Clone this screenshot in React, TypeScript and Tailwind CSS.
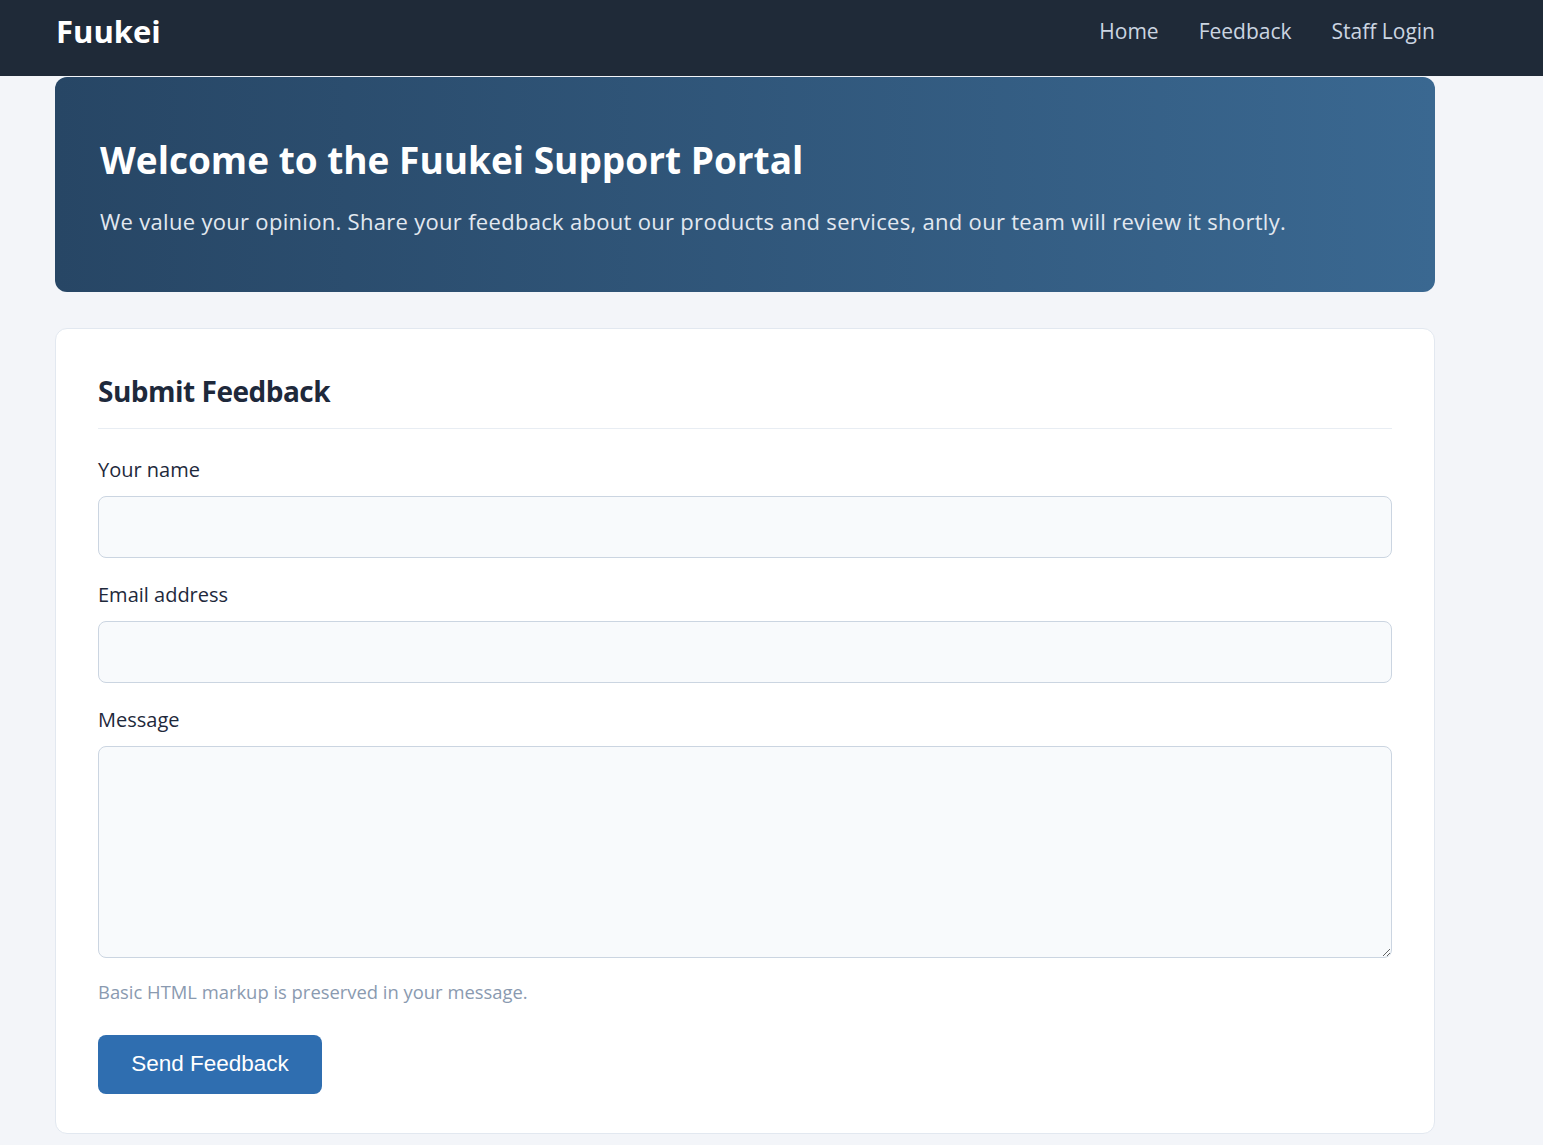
import { useState } from 'react';

const NAV_LINKS = ['Home', 'Feedback', 'Staff Login'];

const FONT = "font-['Open_Sans','Noto_Sans',sans-serif]";

function Field({
  label,
  children,
}: {
  label: string;
  children: React.ReactNode;
}) {
  return (
    <div className="flex flex-col">
      <label className="text-[20px] leading-[26px] text-[#1e293b] mb-[13px]">
        {label}
      </label>
      {children}
    </div>
  );
}

export default function App() {
  const [name, setName] = useState('');
  const [email, setEmail] = useState('');
  const [message, setMessage] = useState('');

  return (
    <div className={`min-h-[1145px] bg-[#f3f5f9] ${FONT}`}>
      <header className="h-[76px] bg-[#1f2a38] flex items-center justify-between pl-[56px] pr-[108px]">
        <div className="text-[31px] font-bold text-white -mt-[14px]">
          Fuukei
        </div>
        <nav className="flex gap-[40px] -mt-[12px]">
          {NAV_LINKS.map((link) => (
            <a
              key={link}
              href="#"
              className="text-[21px] text-[#cbd5e1] hover:text-white"
            >
              {link}
            </a>
          ))}
        </nav>
      </header>

      <main className="ml-[55px] w-[1380px] pb-[10px]">
        <section className="mt-[1px] h-[215px] rounded-[12px] bg-gradient-to-r from-[#274665] to-[#3a6891] px-[45px] pt-[59px]">
          <h1 className="text-[37px] leading-[48px] font-bold text-white">
            Welcome to the Fuukei Support Portal
          </h1>
          <p className="mt-[22px] text-[22px] leading-[30px] text-[#e2e8f0] tracking-[0.3px]">
            We value your opinion. Share your feedback about our products and
            services, and our team will review it shortly.
          </p>
        </section>

        <section className="mt-[36px] bg-white border border-[#e2e8f0] rounded-[12px] px-[42px] pt-[40px] pb-[39px]">
          <h2 className="text-[28px] leading-[44px] font-bold text-[#1e293b] tracking-[-0.5px] pb-[15px] border-b border-[#e8edf3]">
            Submit Feedback
          </h2>

          <form
            className="mt-[28px] flex flex-col gap-[24px]"
            onSubmit={(e) => e.preventDefault()}
          >
            <Field label="Your name">
              <input
                value={name}
                onChange={(e) => setName(e.target.value)}
                className="h-[62px] rounded-[8px] border border-[#cbd5e1] bg-[#f8fafc] px-4 text-[19px] outline-none"
              />
            </Field>
            <Field label="Email address">
              <input
                type="email"
                value={email}
                onChange={(e) => setEmail(e.target.value)}
                className="h-[62px] rounded-[8px] border border-[#cbd5e1] bg-[#f8fafc] px-4 text-[19px] outline-none"
              />
            </Field>
            <div className="flex flex-col">
              <Field label="Message">
                <textarea
                  value={message}
                  onChange={(e) => setMessage(e.target.value)}
                  className="h-[212px] rounded-[8px] border border-[#cbd5e1] bg-[#f8fafc] px-4 py-3 text-[19px] outline-none"
                />
              </Field>
              <p className="mt-[20px] text-[18.4px] text-[#8a9ab0]">
                Basic HTML markup is preserved in your message.
              </p>
            </div>

            <div className="mt-[5px]">
              <button
                type="submit"
                className="w-[224px] h-[59px] rounded-[8px] bg-[#2f6eb0] hover:bg-[#285f99] text-white text-[22.5px] font-['Liberation_Sans',Arial,sans-serif] cursor-pointer"
              >
                Send Feedback
              </button>
            </div>
          </form>
        </section>
      </main>
    </div>
  );
}
